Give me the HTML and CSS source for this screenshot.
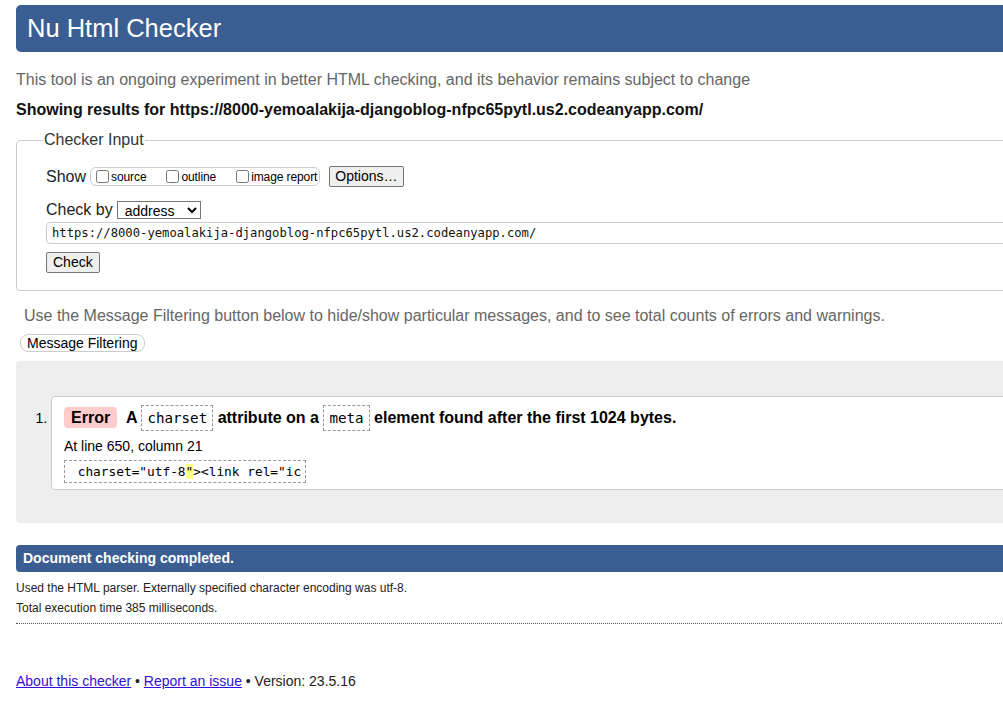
FILE: index.html
```html
<!DOCTYPE html>
<html lang="en">
<head>
<meta charset="utf-8">
<title>Nu Html Checker</title>
<link rel="stylesheet" href="styles.css">
</head>
<body>
<div class="page">
  <h1 class="title">Nu Html Checker</h1>
  <p class="intro">This tool is an ongoing experiment in better HTML checking, and its behavior remains subject to change</p>
  <p class="results">Showing results for https://8000-yemoalakija-djangoblog-nfpc65pytl.us2.codeanyapp.com/</p>

  <fieldset class="checker">
    <legend>Checker Input</legend>
    <div class="row show-row">
      <span class="lbl">Show</span>
      <fieldset class="opts">
        <label class="opt"><input type="checkbox"> source</label>
        <label class="opt"><input type="checkbox"> outline</label>
        <label class="opt"><input type="checkbox">image report</label>
      </fieldset>
      <button class="btn">Options…</button>
    </div>
    <div class="row by-row">
      <span class="lbl">Check by</span>
      <select class="sel"><option>address</option></select>
    </div>
    <input class="url" type="text" value="https://8000-yemoalakija-djangoblog-nfpc65pytl.us2.codeanyapp.com/">
    <div class="row">
      <button class="btn">Check</button>
    </div>
  </fieldset>

  <p class="filter-note">Use the Message Filtering button below to hide/show particular messages, and to see total counts of errors and warnings.</p>
  <button class="btn pill">Message Filtering</button>

  <div class="messages">
    <ol class="list">
      <li class="msg">
        <p class="msg-head"><strong class="badge">Error</strong> <span>A <code>charset</code> attribute on a <code>meta</code> element found after the first 1024 bytes.</span></p>
        <p class="loc">At line 650, column 21</p>
        <p class="extract"><code> charset="utf-8<b class="hl">"</b>&gt;&lt;link rel="ic</code></p>
      </li>
    </ol>
  </div>

  <h2 class="done">Document checking completed.</h2>
  <p class="small">Used the HTML parser. Externally specified character encoding was utf-8.</p>
  <p class="small">Total execution time 385 milliseconds.</p>
  <hr class="dots">

  <p class="footer"><a href="#">About this checker</a> • <a href="#">Report an issue</a> • Version: 23.5.16</p>
</div>
</body>
</html>
```

FILE: styles.css
```css
html, body {
  margin: 0;
  padding: 0;
  background: #fff;
  overflow: hidden;
}
body {
  font-family: "Liberation Sans", Arial, sans-serif;
  color: #000;
}
.page {
  width: 1100px;
  padding: 5px 0 0 16px;
}
.title {
  margin: 0;
  height: 47px;
  background: #3a5e92;
  color: #fff;
  font-weight: normal;
  font-size: 25.5px;
  line-height: 47px;
  padding-left: 11px;
  border-radius: 5px 0 0 5px;
}
.intro {
  margin: 18px 0 0;
  font-size: 16px;
  line-height: 20px;
  color: #666;
}
.results {
  margin: 10px 0 0;
  font-size: 16px;
  line-height: 20px;
  font-weight: bold;
  color: #111;
}
.checker {
  margin: 11px 0 0;
  border: 1px solid #ccc;
  border-radius: 4px;
  padding: 17px 0 17px 29px;
}
.checker legend {
  margin-left: -3px;
  padding: 0 1px;
  font-size: 16px;
  color: #333;
}
.row {
  display: flex;
  align-items: center;
}
.lbl {
  font-size: 16px;
  color: #222;
}
.show-row {
  height: 21px;
}
.opts {
  margin: 0 0 0 4px;
  padding: 0 2px 0 5px;
  border: 1px solid #ccc;
  border-radius: 6px;
  height: 17px;
  display: flex;
  align-items: center;
}
.opt {
  font-size: 12px;
  display: flex;
  align-items: center;
  margin-right: 20px;
  letter-spacing: -0.1px;
}
.opt:last-child {
  margin-right: 0;
}
.opt input {
  margin: 0 2px 0 0;
  width: 13px;
  height: 13px;
}
.btn {
  font-family: "Liberation Sans", Arial, sans-serif;
  font-size: 14px;
  line-height: 16px;
  padding: 1px 6px 2px;
  border: 1px solid #767676;
  border-radius: 2px;
  background: #efefef;
  color: #000;
}
.show-row .btn {
  margin-left: 9px;
  padding: 1px 5px 2px;
}
.by-row {
  margin-top: 13px;
  height: 20px;
}
.sel {
  margin-left: 4px;
  font-family: "Liberation Sans", Arial, sans-serif;
  font-size: 14px;
  height: 18px;
  width: 84px;
  padding: 0 0 0 3px;
  border: 1px solid #767676;
  border-radius: 0;
  background: #fff;
  color: #000;
}
.url {
  display: block;
  box-sizing: border-box;
  margin-top: 2px;
  width: 1100px;
  height: 22px;
  border: 1px solid #ccc;
  border-radius: 4px;
  padding: 0 5px;
  font-family: "DejaVu Sans Mono", monospace;
  font-size: 12.2px;
  color: #111;
}
.checker .row:last-child {
  margin-top: 8px;
}
.filter-note {
  margin: 15px 0 0 8px;
  font-size: 16px;
  line-height: 20px;
  color: #666;
}
.pill {
  margin: 8px 0 0 4px;
  border: 1px solid #ccc;
  border-radius: 8px;
  background: #fff;
  padding: 0 6px;
  line-height: 16px;
}
.messages {
  margin-top: 9px;
  background: #eee;
  border-radius: 4px 0 0 4px;
  padding: 35px 0 33px;
}
.list {
  margin: 0;
  padding: 0 0 0 35px;
  font-size: 14px;
}
.msg {
  background: #fff;
  border: 1px solid #ccc;
  border-radius: 4px 0 0 4px;
  padding: 7px 0 6px 12px;
}
.msg::marker {
  font-size: 14px;
}
.msg-head {
  margin: 0;
  font-size: 16px;
  font-weight: bold;
  line-height: 28px;
}
.badge {
  display: inline-block;
  background: #fcc;
  border-radius: 4px;
  padding: 0 7px;
  line-height: 21px;
  margin-right: 5px;
}
.msg-head code {
  font-family: "DejaVu Sans Mono", monospace;
  font-weight: normal;
  font-size: 14.2px;
  border: 1px dashed #999;
  padding: 4px 5px;
}
.loc {
  margin: 5px 0 0;
  font-size: 14px;
  line-height: 18px;
}
.extract {
  margin: 5px 0 0;
  line-height: 18px;
}
.extract code {
  display: inline-block;
  border: 1px dashed #999;
  padding: 2px 4px 1px 5px;
  font-family: "DejaVu Sans Mono", monospace;
  font-size: 12.8px;
  white-space: pre;
}
.hl {
  font-weight: normal;
  background: #ff8;
}
.done {
  margin: 22px 0 0;
  height: 27px;
  line-height: 27px;
  background: #3a5e92;
  color: #fff;
  font-size: 14px;
  padding-left: 7px;
  border-radius: 4px 0 0 4px;
}
.small {
  margin: 9px 0 0;
  font-size: 12px;
  line-height: 14px;
  color: #222;
}
.small + .small {
  margin-top: 6px;
}
.dots {
  margin: 8px 0 0;
  border: 0;
  border-top: 1px dotted #555;
  height: 0;
}
.footer {
  margin: 49px 0 0;
  font-size: 14px;
  line-height: 16px;
  color: #222;
}
.footer a {
  color: #3010d8;
}
```
